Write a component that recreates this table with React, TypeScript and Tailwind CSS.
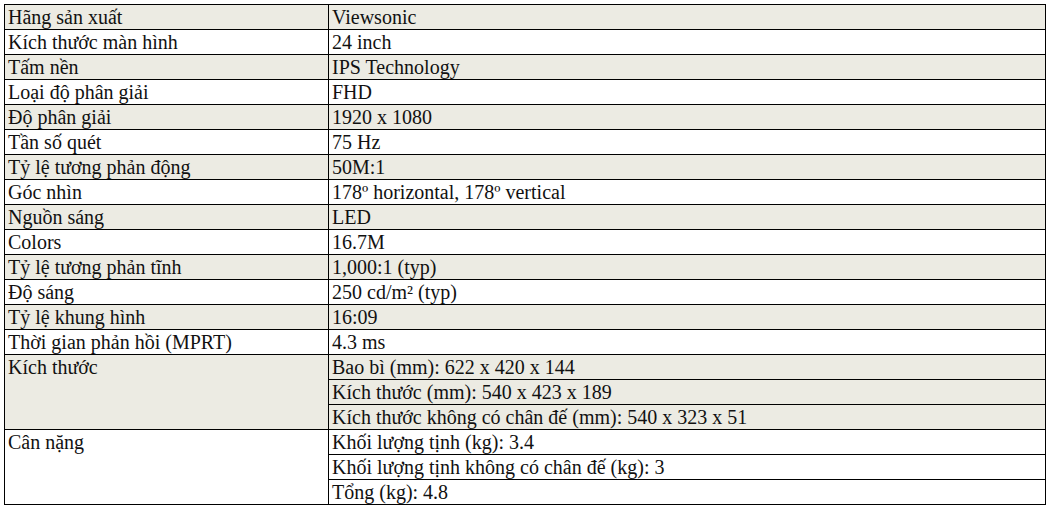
const specs: { label: string; values: string[] }[] = [
  { label: "Hãng sản xuất", values: ["Viewsonic"] },
  { label: "Kích thước màn hình", values: ["24 inch"] },
  { label: "Tấm nền", values: ["IPS Technology"] },
  { label: "Loại độ phân giải", values: ["FHD"] },
  { label: "Độ phân giải", values: ["1920 x 1080"] },
  { label: "Tần số quét", values: ["75 Hz"] },
  { label: "Tỷ lệ tương phản động", values: ["50M:1"] },
  { label: "Góc nhìn", values: ["178º horizontal, 178º vertical"] },
  { label: "Nguồn sáng", values: ["LED"] },
  { label: "Colors", values: ["16.7M"] },
  { label: "Tỷ lệ tương phản tĩnh", values: ["1,000:1 (typ)"] },
  { label: "Độ sáng", values: ["250 cd/m² (typ)"] },
  { label: "Tỷ lệ khung hình", values: ["16:09"] },
  { label: "Thời gian phản hồi (MPRT)", values: ["4.3 ms"] },
  {
    label: "Kích thước",
    values: [
      "Bao bì (mm): 622 x 420 x 144",
      "Kích thước (mm): 540 x 423 x 189",
      "Kích thước không có chân đế (mm): 540 x 323 x 51",
    ],
  },
  {
    label: "Cân nặng",
    values: [
      "Khối lượng tịnh (kg): 3.4",
      "Khối lượng tịnh không có chân đế (kg): 3",
      "Tổng (kg): 4.8",
    ],
  },
];

export default function App() {
  return (
    <div className="w-[1050px] h-[509px] bg-white pl-[4px] pt-[4px] font-['Liberation_Serif',serif] text-[20px] text-[#111]">
      <table className="w-[1042px] border-collapse border border-black">
        <tbody>
          {specs.map((spec, i) => {
            const bg = i % 2 === 0 ? "bg-[#ecebe3]" : "bg-white";
            return spec.values.map((value, j) => (
              <tr key={`${i}-${j}`} className={bg}>
                {j === 0 && (
                  <td
                    rowSpan={spec.values.length}
                    className="w-[324px] h-[25px] border border-black px-[3px] py-0 align-top leading-[24px]"
                  >
                    {spec.label}
                  </td>
                )}
                <td className="h-[25px] border border-black px-[3px] py-0 align-top leading-[24px]">
                  {value}
                </td>
              </tr>
            ));
          })}
        </tbody>
      </table>
    </div>
  );
}
